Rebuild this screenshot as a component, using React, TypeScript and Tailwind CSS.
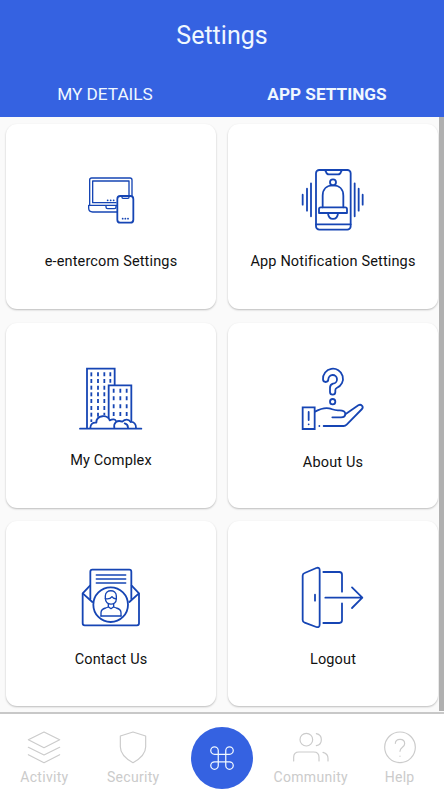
import { useState, type ReactNode } from 'react'
import clsx from 'clsx'

interface IconProps {
  viewBox?: string
  children: ReactNode
}

function TileIcon({ viewBox = '3 0 240 240', children }: IconProps) {
  return (
    <svg
      viewBox={viewBox}
      className="w-20 h-20 shrink-0 text-[#1645b4]"
      fill="none"
      stroke="currentColor"
      strokeWidth={5.4}
      strokeLinecap="round"
      strokeLinejoin="round"
    >
      {children}
    </svg>
  )
}

function DevicesIcon() {
  return (
    <TileIcon viewBox="3 3 240 240">
      <g strokeWidth={4}>
        <path d="M59 135V60q0-6 6-6H180q6 0 6 6v47" />
        <path d="M138 128H68V63H177v44" />
        <path d="M140 136H56v8q0 12 12 12h74M108 137v4q0 5 5 5h20q5 0 5-5v-4" />
      </g>
      <rect x="142" y="108" width="48" height="80" rx="9" />
      <path d="M156 109v3q0 3 3 3h15q3 0 3-3v-3" strokeWidth={4} />
      <path d="M113 121h.1M122 121h.1M131 121h.1M158 176h.1M166 176h.1M174 176h.1" />
    </TileIcon>
  )
}

function NotificationIcon() {
  return (
    <TileIcon viewBox="3 3 240 240">
      <rect x="72" y="30" width="104" height="179" rx="10" />
      <path d="M98 31q3 0 4 4 2 8 9 8h27q7 0 9-8 1-4 4-4M72 193H176" />
      <circle cx="123" cy="67" r="9" />
      <path d="M92 142v-35c0-19 12-31 31-31s31 12 31 31v35" />
      <path d="M81 159v-12q0-5 5-5h74q5 0 5 5v12zM108 160c2 22 28 22 30 0" />
      <path d="M57 70v99M45 86v66M32 104v30M188 70v99M200 86v66M212 104v30" />
    </TileIcon>
  )
}

const TOWER_ROWS = [43, 63, 83, 103, 123, 144, 164, 184]
const BLOCK_ROWS = [92, 115, 139, 162]

function BuildingsIcon() {
  return (
    <TileIcon>
      <path d="M51 204V26H134V74M116 174V76H184V182" strokeLinejoin="miter" />
      <path d="M30 206H214" />
      <path d="M61 204c0-11 6-17 18-16 0-24 35-25 40-7 10-5 17-3 19 2" />
      <path d="M133 204c-3-16 8-25 24-19 8-8 19-8 25 1 10-1 17 7 16 18M164 190c7 2 10 7 10 13" />
      <g strokeLinecap="butt">
        {TOWER_ROWS.map((y) => (
          <path key={y} d={y < 170 ? `M64 ${y - 6}v12` : `M64 ${y - 6}v8`} />
        ))}
        {TOWER_ROWS.slice(0, 6).map((y) => (
          <path key={y} d={`M84 ${y - 6}v12M103 ${y - 6}v12`} />
        ))}
        <path d="M84 158v12M103 158v8M121 37v12M121 57v11" />
        {BLOCK_ROWS.map((y) => (
          <path key={y} d={`M131 ${y - 6}v12M151 ${y - 6}v12M170 ${y - 6}v12`} />
        ))}
      </g>
    </TileIcon>
  )
}

function AboutIcon() {
  return (
    <TileIcon>
      <path d="M93 58a30 30 0 1 1 41 26q-4 2-4 7v5a8 8 0 0 1-16 0V83q0-9 9-12a13 13 0 1 0-14-13a8 8 0 0 1-16 0z" />
      <circle cx="122" cy="125" r="8" />
      <path d="M32 142H68V207H32z" strokeLinejoin="miter" />
      <path d="M50 156v24M50 193v.1M82 198h.1M95 198h60q5 0 9-4l46-47c6-8-3-16-11-11l-39 27" />
      <path d="M69 155c13-7 26-13 42-10 10 2 16 7 29 6 14-1 20 5 20 11 0 8-6 10-13 10h-26" />
    </TileIcon>
  )
}

function ContactIcon() {
  return (
    <TileIcon>
      <path d="M61 123V41q0-6 6-6H178q6 0 6 6v82" />
      <path d="M79 51H167M79 63H167M79 75H167" strokeWidth={4.6} />
      <path d="M60 83L38 106V196q0 6 6 6H201q6 0 6-6V106L185 83" />
      <path d="M39 107L67 132M206 107L178 132" />
      <circle cx="122" cy="140" r="52" />
      <g strokeWidth={4}>
        <path d="M106 121v-7c0-21 33-21 33 0v9c0 21-33 21-33-2z" />
        <path d="M106 122c13 3 17-2 20-6 3 5 8 7 13 6M115 138v8l8 6 8-6v-8" />
        <path d="M93 174v-10c0-9 6-12 14-14l8-3M131 147l8 3c8 2 14 5 14 14v10" />
        <path d="M93 174H153" />
      </g>
    </TileIcon>
  )
}

function LogoutIcon() {
  return (
    <TileIcon>
      <path d="M32 53q0-6 6-8L73 30q10-3 10 7V199q0 11-10 8L38 194q-6-2-6-8z" />
      <path d="M94 42H142q8 0 8 8V101M150 136V187q0 8-8 8H94M69 110v18" />
      <path d="M100 119H211M180 88L211 119L180 150" />
    </TileIcon>
  )
}

interface Tile {
  label: string
  icon: ReactNode
  labelClass: string
}

const TILES: Tile[] = [
  { label: 'e-entercom Settings', icon: <DevicesIcon />, labelClass: 'mt-2.5' },
  { label: 'App Notification Settings', icon: <NotificationIcon />, labelClass: 'mt-2.5' },
  { label: 'My Complex', icon: <BuildingsIcon />, labelClass: 'mt-2.5' },
  { label: 'About Us', icon: <AboutIcon />, labelClass: 'mt-3' },
  { label: 'Contact Us', icon: <ContactIcon />, labelClass: 'mt-[11px]' },
  { label: 'Logout', icon: <LogoutIcon />, labelClass: 'mt-[11px]' },
]

function NavIcon({ children }: { children: ReactNode }) {
  return (
    <svg
      viewBox="0 0 108 108"
      className="w-9 h-9"
      fill="none"
      stroke="currentColor"
      strokeWidth={3.5}
      strokeLinecap="round"
      strokeLinejoin="round"
    >
      {children}
    </svg>
  )
}

function NavItem({ label, children }: { label: string; children: ReactNode }) {
  return (
    <button className="flex flex-col items-center pt-3.5 text-[#cbcbcb]">
      {children}
      <span className="mt-[3px] text-[14px] leading-5 tracking-[0.3px] whitespace-nowrap">{label}</span>
    </button>
  )
}

export default function App() {
  const [tab, setTab] = useState<'details' | 'app'>('app')

  return (
    <div className="flex flex-col w-[444px] h-[800px] overflow-hidden bg-white font-['Roboto',sans-serif]">
      <header className="h-[117px] shrink-0 bg-[#3562e1] text-[#f0f8ff]">
        <h1 className="pt-[18px] text-center text-[25px] leading-9">Settings</h1>
        <div className="mt-7 grid grid-cols-2 text-[17.2px] leading-6">
          <button
            onClick={() => setTab('details')}
            className={clsx('-ml-3', tab === 'details' && 'font-bold')}
          >
            MY DETAILS
          </button>
          <button
            onClick={() => setTab('app')}
            className={clsx('-ml-3', tab === 'app' && 'font-bold')}
          >
            APP SETTINGS
          </button>
        </div>
      </header>

      <main className="flex flex-1 min-h-0 bg-[#fafafa]">
        <div className="grid flex-1 grid-cols-[210px_210px] auto-rows-[185px] gap-x-3 gap-y-[13.5px] pl-1.5 pt-[7px]">
          {TILES.map((tile) => (
            <button
              key={tile.label}
              className="flex flex-col items-center pt-[37px] rounded-[11px] bg-white shadow-[0_1px_2px_rgba(0,0,0,0.25)]"
            >
              {tile.icon}
              <span className={clsx('text-[14.5px] leading-[22px] tracking-[0.15px] text-[#111]', tile.labelClass)}>
                {tile.label}
              </span>
            </button>
          ))}
        </div>
        <div className="w-[5px] h-[594px] bg-[#b0b0b0]" />
      </main>

      <nav className="grid h-[88px] shrink-0 grid-cols-5 border-t-2 border-[#c8c8c8] bg-white">
        <NavItem label="Activity">
          <NavIcon>
            <path d="M54 12L101 35L54 59L7 35zM7 58L54 81L101 58M7 80L54 104L101 80" />
          </NavIcon>
        </NavItem>
        <NavItem label="Security">
          <NavIcon>
            <path d="M54 12L92 24V56C92 79 72 94 54 104C36 94 16 79 16 56V24z" />
          </NavIcon>
        </NavItem>
        <div className="flex justify-center pt-[13px]">
          <button className="flex items-center justify-center w-[62px] h-[62px] rounded-full bg-[#3562e1] text-[#f0f8ff]">
            <svg
              viewBox="0 0 24 24"
              className="w-[30px] h-[30px]"
              fill="none"
              stroke="currentColor"
              strokeWidth={1}
              strokeLinejoin="round"
            >
              <path d="M18 3a3 3 0 0 0-3 3v12a3 3 0 1 0 3-3H6a3 3 0 1 0 3 3V6a3 3 0 1 0-3 3h12a3 3 0 0 0 0-6z" />
            </svg>
          </button>
        </div>
        <NavItem label="Community">
          <NavIcon>
            <circle cx="40" cy="35" r="19" />
            <path d="M2 99V88Q2 72 18 72H62Q78 72 78 88V99M70 17C90 21 90 49 70 53M90 73Q105 77 105 91V99" />
          </NavIcon>
        </NavItem>
        <NavItem label="Help">
          <NavIcon>
            <circle cx="54" cy="58" r="46" />
            <path d="M40 46C41 30 68 30 68 47C68 58 54 58 54 70M54 84v1" />
          </NavIcon>
        </NavItem>
      </nav>
    </div>
  )
}
